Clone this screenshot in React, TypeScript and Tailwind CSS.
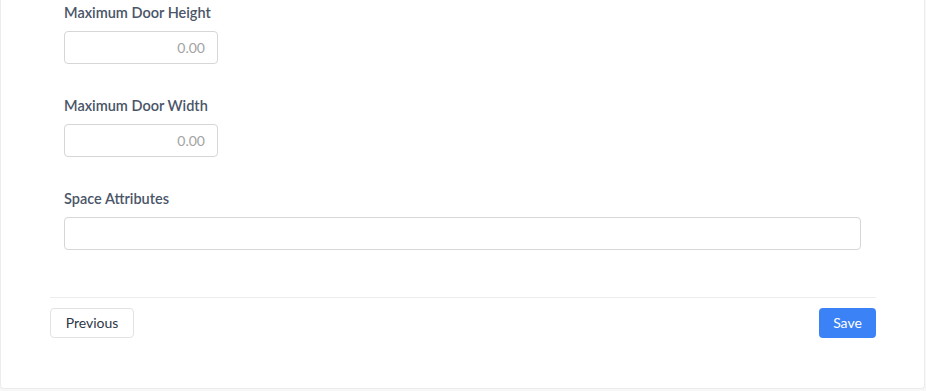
import { useState } from "react";

function NumberField({ label }: { label: string }) {
  const [value, setValue] = useState("");
  return (
    <label className="block">
      <span className="mb-2 block text-[14.5px] font-semibold leading-5 text-[#4a5568]">{label}</span>
      <input
        type="text"
        inputMode="decimal"
        placeholder="0.00"
        value={value}
        onChange={(e) => setValue(e.target.value)}
        className="h-[33px] w-[154px] rounded border border-[#d6d6d6] bg-white px-3 text-right text-sm text-[#4a5568] placeholder:text-[#a3a3a3] outline-none"
      />
    </label>
  );
}

export default function App() {
  const [attrs, setAttrs] = useState("");

  return (
    <div className="h-[391px] bg-[#f7f7f7] pr-px pb-[2px] font-['Lato','Noto_Sans',sans-serif]">
      <div className="flex h-full flex-col rounded-b border border-t-0 border-[#ececec] bg-white pl-[49px] pr-[48px] pt-[3px]">
        <div className="flex flex-col gap-8 pl-[14px] pr-[15px]">
          <NumberField label="Maximum Door Height" />
          <NumberField label="Maximum Door Width" />
          <label className="block">
            <span className="mb-2 block text-[14.5px] font-semibold leading-5 text-[#4a5568]">Space Attributes</span>
            <input
              type="text"
              value={attrs}
              onChange={(e) => setAttrs(e.target.value)}
              className="h-[33px] w-full rounded border border-[#d6d6d6] bg-white px-3 text-sm text-[#4a5568] outline-none"
            />
          </label>
        </div>

        <div className="mt-[47px] border-t border-[#ededed] pt-[10px]">
          <div className="flex items-center justify-between">
            <button className="h-[30px] w-[84px] rounded border border-[#e2e2e2] bg-white text-sm text-[#2d3748]">
              Previous
            </button>
            <button className="h-[30px] w-[57px] rounded bg-[#3b82f6] text-sm text-white">Save</button>
          </div>
        </div>
      </div>
    </div>
  );
}
